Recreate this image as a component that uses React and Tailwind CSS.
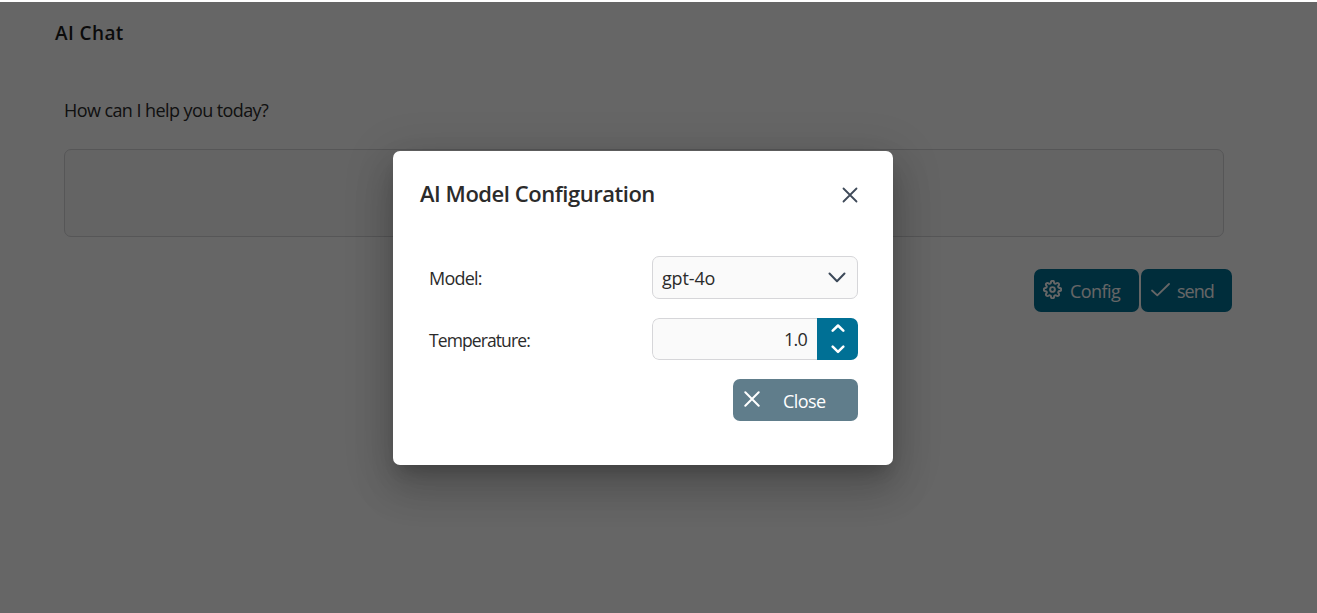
import { FiSettings } from "react-icons/fi";

function Glyph({ d, className, viewBox, strokeWidth = 2 }) {
  return (
    <svg
      viewBox={viewBox}
      className={className}
      fill="none"
      stroke="currentColor"
      strokeWidth={strokeWidth}
      strokeLinecap="round"
      strokeLinejoin="round"
      aria-hidden="true"
    >
      <path d={d} />
    </svg>
  );
}

function ChatPage() {
  return (
    <main className="h-full pt-[17px] pl-[55px]">
      <h1 className="h-7 text-[19px] leading-7 font-semibold tracking-[0.4px] text-[#1c1c1c]">AI Chat</h1>
      <div className="mt-[50px] w-[1177px]">
        <p className="ml-[9px] h-7 text-[18px] leading-[26px] tracking-[-0.58px]">How can I help you today?</p>
        <div className="mt-[24px] ml-[9px] h-[88px] w-[1160px] rounded-[7px] border border-[#d6d6d9] bg-[#fafafa]" />
        <div className="mt-8 flex justify-end gap-[2px] text-[18px] text-white">
          <button className="flex h-[43px] w-[105px] items-center rounded-[7px] bg-[#007095] pl-[9px]">
            <FiSettings className="mb-[2px] size-[19px] shrink-0 [stroke-width:2.5]" />
            <span className="mt-[2px] ml-2 tracking-[-0.55px]">Config</span>
          </button>
          <button className="flex h-[43px] w-[91px] items-center rounded-[7px] bg-[#007095] pl-[10px]">
            <Glyph viewBox="0 0 19 14" className="mb-[1px] h-[14px] w-[19px] shrink-0" strokeWidth={1.8} d="M1 7.5 6.3 12.3 18 1" />
            <span className="mt-[2px] ml-[7px] tracking-[-1px]">send</span>
          </button>
        </div>
      </div>
    </main>
  );
}

function ConfigDialog() {
  return (
    <section
      role="dialog"
      className="mt-[149px] ml-[393px] h-[314px] w-[500px] rounded-[7px] bg-white pr-[35px] pl-[27px] shadow-[0_11px_15px_-7px_rgba(0,0,0,0.2),0_24px_38px_3px_rgba(0,0,0,0.14),0_9px_46px_8px_rgba(0,0,0,0.12)]"
    >
      <header className="flex h-[86px] items-center justify-between">
        <h2 className="mb-[2px] text-[22px] font-semibold tracking-[-0.46px]">AI Model Configuration</h2>
        <button aria-label="Close dialog" className="text-[#3f4a59]">
          <Glyph viewBox="0 0 16 16" className="mt-[2px] size-4" strokeWidth={1.8} d="M1.5 1.5 14.5 14.5M14.5 1.5 1.5 14.5" />
        </button>
      </header>
      <div className="mt-[19px] ml-[9px] flex flex-col text-[18px]">
        <div className="flex h-[43px] items-center justify-between">
          <label className="mt-[2px] tracking-[-0.8px]">Model:</label>
          <button className="flex h-[43px] w-[206px] items-center justify-between rounded-[7px] border border-[#d6d6d9] bg-[#fafafa] pr-[11px] pl-[9px]">
            <span className="mt-[2px] tracking-[-0.15px]">gpt-4o</span>
            <Glyph viewBox="0 0 18 11" className="h-[11px] w-[18px] text-[#3b4858]" d="M1.5 1.5 9 9.2 16.5 1.5" />
          </button>
        </div>
        <div className="mt-[19px] flex h-[42px] items-center justify-between">
          <label className="mt-[2px] text-[17.5px] tracking-[-0.9px]">Temperature:</label>
          <div className="flex h-[42px] w-[206px] overflow-hidden rounded-[7px]">
            <div className="flex flex-1 items-center justify-end rounded-l-[7px] border border-r-0 border-[#d6d6d9] bg-[#fafafa] pr-[10px] tracking-[-0.8px]">
              1.0
            </div>
            <div className="flex w-[41px] flex-col bg-[#007095] pl-[1px] text-white">
              <button aria-label="Increase" className="flex h-[21px] items-center justify-center">
                <Glyph viewBox="0 0 14 9" className="h-[9px] w-[14px]" strokeWidth={2.5} d="M1.7 6.7 7 1.5 12.3 6.7" />
              </button>
              <button aria-label="Decrease" className="flex h-[21px] items-center justify-center">
                <Glyph viewBox="0 0 14 9" className="h-[9px] w-[14px]" strokeWidth={2.5} d="M1.7 1.7 7 6.9 12.3 1.7" />
              </button>
            </div>
          </div>
        </div>
        <button className="mt-[19px] flex h-[42px] w-[125px] items-center self-end rounded-[7px] bg-[#607d8b] pl-[11px] text-white">
          <Glyph viewBox="0 0 16 16" className="mb-[2px] size-4 shrink-0" strokeWidth={2} d="M1.3 1.3 14.7 14.7M14.7 1.3 1.3 14.7" />
          <span className="mt-[2px] ml-[23px] tracking-[-0.6px]">Close</span>
        </button>
      </div>
    </section>
  );
}

export default function App() {
  return (
    <div className="h-[613px] w-[1317px] overflow-hidden bg-white pt-[2px] font-['Open_Sans','Noto_Sans',sans-serif] text-[#2b2b2b]">
      <div className="relative h-[611px] overflow-hidden">
        <ChatPage />
        <div className="absolute inset-0 overflow-hidden bg-black/60">
          <ConfigDialog />
        </div>
      </div>
    </div>
  );
}
